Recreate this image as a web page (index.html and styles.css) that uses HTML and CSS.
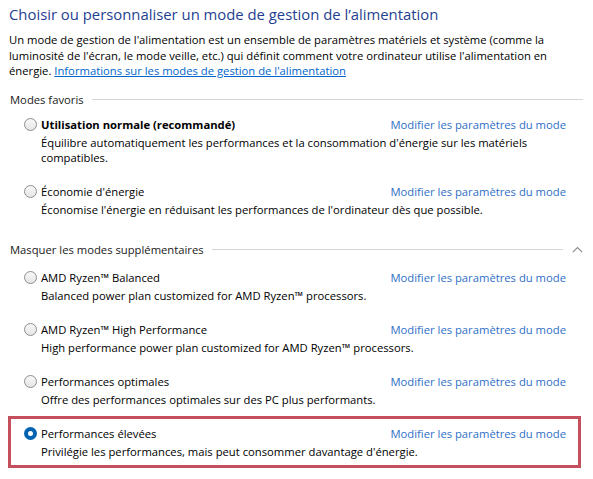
FILE: index.html
```html
<!DOCTYPE html>
<html lang="fr">
<head>
<meta charset="utf-8">
<title>Options d'alimentation</title>
<link rel="stylesheet" href="styles.css">
</head>
<body>
<div class="page">
  <h1 class="title">Choisir ou personnaliser un mode de gestion de l’alimentation</h1>
  <p class="intro">Un mode de gestion de l'alimentation est un ensemble de paramètres matériels et système (comme la<br>luminosité de l'écran, le mode veille, etc.) qui définit comment votre ordinateur utilise l'alimentation en<br>énergie. <a href="#" class="info-link">Informations sur les modes de gestion de l'alimentation</a></p>

  <section class="group group-favs">
    <div class="group-head"><span class="group-label">Modes favoris</span><span class="rule"></span></div>
    <div class="plan">
      <div class="plan-top">
        <label class="plan-name bold"><span class="radio"></span>Utilisation normale (recommandé)</label>
        <a href="#" class="plan-link">Modifier les paramètres du mode</a>
      </div>
      <p class="plan-desc">Équilibre automatiquement les performances et la consommation d'énergie sur les matériels<br>compatibles.</p>
    </div>
    <div class="plan">
      <div class="plan-top">
        <label class="plan-name"><span class="radio"></span>Économie d'énergie</label>
        <a href="#" class="plan-link">Modifier les paramètres du mode</a>
      </div>
      <p class="plan-desc">Économise l'énergie en réduisant les performances de l'ordinateur dès que possible.</p>
    </div>
  </section>

  <section class="group group-extra">
    <div class="group-head group-head-toggle"><span class="group-label">Masquer les modes supplémentaires</span><span class="rule"></span>
      <svg class="chevron" width="11" height="7" viewBox="0 0 11 7"><path d="M0.8 6.2 L5.5 1.5 L10.2 6.2" fill="none" stroke="#8a8a8a" stroke-width="1.1"/></svg>
    </div>
    <div class="plan">
      <div class="plan-top">
        <label class="plan-name"><span class="radio"></span>AMD Ryzen™ Balanced</label>
        <a href="#" class="plan-link">Modifier les paramètres du mode</a>
      </div>
      <p class="plan-desc">Balanced power plan customized for AMD Ryzen™ processors.</p>
    </div>
    <div class="plan">
      <div class="plan-top">
        <label class="plan-name"><span class="radio"></span>AMD Ryzen™ High Performance</label>
        <a href="#" class="plan-link">Modifier les paramètres du mode</a>
      </div>
      <p class="plan-desc">High performance power plan customized for AMD Ryzen™ processors.</p>
    </div>
    <div class="plan">
      <div class="plan-top">
        <label class="plan-name"><span class="radio"></span>Performances optimales</label>
        <a href="#" class="plan-link">Modifier les paramètres du mode</a>
      </div>
      <p class="plan-desc">Offre des performances optimales sur des PC plus performants.</p>
    </div>
    <div class="plan selected">
      <div class="plan-top">
        <label class="plan-name"><span class="radio checked"></span>Performances élevées</label>
        <a href="#" class="plan-link">Modifier les paramètres du mode</a>
      </div>
      <p class="plan-desc">Privilégie les performances, mais peut consommer davantage d'énergie.</p>
    </div>
  </section>
</div>
</body>
</html>
```

FILE: styles.css
```css
* { box-sizing: border-box; }
html, body { margin: 0; padding: 0; background: #ffffff; }
body {
  font-family: "Open Sans", "Noto Sans", sans-serif;
  font-size: 11.25px;
  color: #000000;
}
.page {
  width: 593px;
  padding: 3px 10px 0 8px;
}
.title {
  margin: 0;
  font-size: 14.85px;
  font-weight: 400;
  line-height: 22px;
  color: #1f3f91;
  padding-left: 1px;
}
.intro {
  margin: 7px 0 0;
  line-height: 15.5px;
  padding-left: 1px;
}
.info-link {
  color: #0066cc;
  text-decoration: underline;
}
.group { margin-top: 12.5px; }
.group-extra { margin-top: 15px; }
.group-head {
  display: flex;
  align-items: center;
  height: 16px;
  gap: 8px;
  padding-left: 2px;
}
.group-head-toggle { margin-bottom: 3px; }
.group-label { color: #1a1a1a; }
.rule {
  flex: 1;
  height: 1px;
  background: #d6d6d6;
}
.chevron {
  margin-left: 1px;
  margin-right: 0;
  flex: none;
}
.plan {
  border: 3px solid transparent;
  padding: 6px 12px 6px 13px;
  margin-right: 2px;
}
.plan.selected { border-color: #c64f5d; }
.plan-top {
  display: flex;
  justify-content: space-between;
  align-items: center;
  height: 16px;
}
.plan-name {
  display: flex;
  align-items: center;
  gap: 4px;
}
.plan-name.bold { font-weight: 700; }
.radio {
  width: 13px;
  height: 13px;
  border-radius: 50%;
  border: 1px solid #8e8e8e;
  background: linear-gradient(#f7f7f7, #e6e6e6);
  flex: none;
}
.radio.checked {
  border: none;
  background: #0063b1;
  display: flex;
  align-items: center;
  justify-content: center;
}
.radio.checked::after {
  content: "";
  width: 5px;
  height: 5px;
  border-radius: 50%;
  background: #ffffff;
}
.plan-link {
  color: #2f6fc6;
  text-decoration: none;
}
.plan-desc {
  margin: 3px 0 0 17px;
  line-height: 15px;
}
```
